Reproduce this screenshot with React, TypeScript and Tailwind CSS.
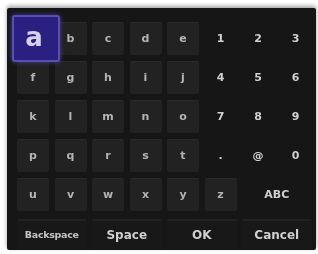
import React from "react";

type Key = { label: string; boxed: boolean; span?: number };

const rows: Key[][] = [
  ["a", "b", "c", "d", "e"].map((l) => ({ label: l, boxed: true })).concat(
    ["1", "2", "3"].map((l) => ({ label: l, boxed: false }))
  ),
  ["f", "g", "h", "i", "j"].map((l) => ({ label: l, boxed: true })).concat(
    ["4", "5", "6"].map((l) => ({ label: l, boxed: false }))
  ),
  ["k", "l", "m", "n", "o"].map((l) => ({ label: l, boxed: true })).concat(
    ["7", "8", "9"].map((l) => ({ label: l, boxed: false }))
  ),
  ["p", "q", "r", "s", "t"].map((l) => ({ label: l, boxed: true })).concat(
    [".", "@", "0"].map((l) => ({ label: l, boxed: false }))
  ),
  ["u", "v", "w", "x", "y", "z"]
    .map((l) => ({ label: l, boxed: true }))
    .concat([{ label: "ABC", boxed: false, span: 2 }]),
];

const bottom = [
  { label: "Backspace", small: true },
  { label: "Space", small: false },
  { label: "OK", small: false },
  { label: "Cancel", small: false },
];

function KeyCell({ k }: { k: Key }) {
  if (k.label === "a") {
    return (
      <div className="relative h-[33px]">
        <div className="absolute left-[-5px] top-[-7px] w-[48px] h-[47px] rounded-[3px] border-2 border-[#5a4fb0] bg-[#2b1f82] shadow-[0_0_5px_#4a3fa0] flex items-center justify-center">
          <span className="text-[26px] leading-none font-bold text-[#d6d2ee] pb-[3px] pr-[4px]">a</span>
        </div>
      </div>
    );
  }
  return (
    <div
      className={
        k.boxed
          ? "h-[33px] rounded-[2px] bg-[#222222] border-t border-[#2a2a2a] flex items-center justify-center"
          : "h-[33px] flex items-center justify-center"
      }
      style={k.span ? { gridColumn: `span ${k.span}` } : undefined}
    >
      <span
        className={
          k.boxed
            ? "text-[11px] leading-none font-bold text-[#b4b4b4]"
            : "text-[11px] leading-none font-bold text-[#d0d0d0]"
        }
      >
        {k.label}
      </span>
    </div>
  );
}

export default function App() {
  return (
    <div
      className="w-[318px] h-[254px] bg-white pt-[8px] pl-[7px] overflow-hidden"
      style={{ fontFamily: '"DejaVu Sans", "Liberation Sans", sans-serif' }}
    >
      <div className="w-[309px] h-[242px] bg-[#161616] rounded-[2px] pt-[13.5px] pl-[10px] shadow-[0_-2px_4px_#a0a0a0] blur-[0.4px]">
        <div className="grid grid-cols-[repeat(8,32px)] gap-x-[5.5px] gap-y-[6px]">
          {rows.map((r, ri) => r.map((k, ki) => <KeyCell key={`${ri}-${ki}`} k={k} />))}
        </div>
        <div className="mt-[8.5px] grid grid-cols-[repeat(4,69.5px)] gap-x-[5.5px]">
          {bottom.map((b) => (
            <div
              key={b.label}
              className="h-[30px] rounded-[2px] bg-[#181818] border-t-2 border-[#222222] flex items-center justify-center"
            >
              <span
                className={
                  b.small
                    ? "text-[9.5px] leading-none font-bold text-[#c4c4c4] tracking-[-0.3px]"
                    : "text-[12px] leading-none font-bold text-[#cfcfcf]"
                }
              >
                {b.label}
              </span>
            </div>
          ))}
        </div>
      </div>
    </div>
  );
}
